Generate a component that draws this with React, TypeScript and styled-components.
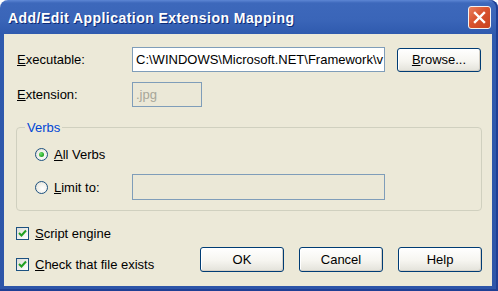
import React from "react";
import styled, { createGlobalStyle } from "styled-components";

const GlobalStyle = createGlobalStyle`
  html, body {
    margin: 0;
    padding: 0;
    background: #ffffff;
  }
  body {
    font-family: "Liberation Sans", Arial, sans-serif;
    font-size: 13px;
    color: #000;
  }
`;

const Window = styled.div`
  width: 498px;
  height: 291px;
  display: flex;
  flex-direction: column;
  border-radius: 8px 8px 0 0;
  background: linear-gradient(180deg, #5d86d4 0px, #3d68bb 3px, #3a65b8 20px, #2f5aae 34px, #2d55a8 100%);
  box-shadow: inset -2px 0 0 #1f3f94, inset 0 -2px 0 #1f3f94;
  overflow: hidden;
`;

const TitleBar = styled.div`
  height: 34px;
  flex: none;
  display: flex;
  align-items: center;
  justify-content: space-between;
  padding: 0 8px 0 8px;
`;

const Title = styled.div`
  color: #fff;
  font-family: "Liberation Sans", Arial, sans-serif;
  font-weight: bold;
  font-size: 14px;
  letter-spacing: 0.45px;
  text-shadow: 1px 1px 0 #0c2a78;
  padding-top: 2px;
`;

const CloseButton = styled.div`
  width: 21px;
  height: 21px;
  border: 1px solid #f2f2f2;
  border-radius: 3px;
  background: linear-gradient(135deg, #e9805f 0%, #d9532f 45%, #c8421f 100%);
  display: flex;
  align-items: center;
  justify-content: center;
  margin-top: 1px;
  margin-right: -1px;
`;

const Body = styled.div`
  flex: 1;
  margin: 0 6px 5px 4px;
  background: #ece9d8;
  padding: 13px 10px 0 12px;
  display: flex;
  flex-direction: column;
`;

const FieldRow = styled.div<{ top?: number }>`
  display: grid;
  grid-template-columns: 116px 253px 1fr;
  align-items: center;
  height: 25px;
  margin-top: ${(p) => p.top ?? 0}px;
`;

const Label = styled.span`
  padding-left: 1px;
  white-space: nowrap;
`;

const TextBox = styled.div<{ width?: number; disabled?: boolean; height?: number }>`
  box-sizing: border-box;
  width: ${(p) => (p.width ? `${p.width}px` : "100%")};
  height: ${(p) => p.height ?? 25}px;
  border: 1px solid #7f9db9;
  background: ${(p) => (p.disabled ? "#ebe8d7" : "#ffffff")};
  color: ${(p) => (p.disabled ? "#a7a699" : "#000")};
  display: flex;
  align-items: center;
  padding: 0 3px;
  white-space: nowrap;
  overflow: hidden;
`;

const Button = styled.div<{ width?: number; height?: number }>`
  box-sizing: border-box;
  width: ${(p) => p.width ?? 84}px;
  height: ${(p) => p.height ?? 25}px;
  border: 1px solid #003c74;
  border-radius: 3px;
  background: linear-gradient(180deg, #ffffff 0%, #f6f5f0 55%, #e3e2da 100%);
  box-shadow: inset -1px -1px 0 #d6d0c5, inset 1px 1px 0 #fff;
  display: flex;
  align-items: center;
  justify-content: center;
  color: #000;
`;

const Group = styled.fieldset`
  margin: 13px 0 0 0;
  padding: 9px 0 10px 18px;
  border: 1px solid #d0d0bf;
  border-radius: 4px;
  min-width: 0;
`;

const Legend = styled.legend`
  color: #0046d5;
  margin-left: -10px;
  padding: 0 2px;
  line-height: 15px;
`;

const RadioRow = styled.div<{ top?: number; h?: number }>`
  display: grid;
  grid-template-columns: 97px 253px;
  align-items: center;
  height: ${(p) => p.h ?? 20}px;
  margin-top: ${(p) => p.top ?? 0}px;
`;

const Option = styled.label`
  display: flex;
  align-items: center;
  gap: 6px;
  white-space: nowrap;
`;

const RadioCircle = styled.span<{ checked?: boolean }>`
  box-sizing: border-box;
  width: 13px;
  height: 13px;
  border-radius: 50%;
  border: 1px solid #1c5180;
  background: radial-gradient(circle at 60% 60%, #ffffff 0%, #f0efe8 55%, #d8d6cb 100%);
  display: flex;
  align-items: center;
  justify-content: center;

  &::after {
    content: "";
    display: ${(p) => (p.checked ? "block" : "none")};
    width: 5px;
    height: 5px;
    border-radius: 50%;
    background: radial-gradient(circle at 35% 35%, #6fe46f 0%, #21a121 70%);
  }
`;

const CheckBoxBox = styled.span`
  box-sizing: border-box;
  width: 13px;
  height: 13px;
  border: 1px solid #1c5180;
  background: linear-gradient(135deg, #dcdcd7 0%, #ffffff 100%);
  display: flex;
  align-items: center;
  justify-content: center;
`;

const Footer = styled.div`
  display: flex;
  justify-content: space-between;
  align-items: flex-end;
  margin-top: 12px;
`;

const CheckList = styled.div`
  display: flex;
  flex-direction: column;
  gap: 11px;
`;

const CheckRow = styled.label`
  display: flex;
  align-items: center;
  gap: 6px;
  height: 20px;
  white-space: nowrap;
`;

const ButtonBar = styled.div`
  display: flex;
  gap: 15px;
  margin-bottom: 2px;
`;

const U = styled.span`
  text-decoration: underline;
`;

const Check = () => (
  <CheckBoxBox>
    <svg width="9" height="9" viewBox="0 0 9 9">
      <path d="M1 4 L3.5 6.5 L8 1.5" fill="none" stroke="#21a121" strokeWidth="2" />
    </svg>
  </CheckBoxBox>
);

export default function App() {
  return (
    <>
      <GlobalStyle />
      <Window>
        <TitleBar>
          <Title>Add/Edit Application Extension Mapping</Title>
          <CloseButton>
            <svg width="13" height="13" viewBox="0 0 13 13">
              <path d="M2 2 L11 11 M11 2 L2 11" stroke="#fff" strokeWidth="2.4" strokeLinecap="square" />
            </svg>
          </CloseButton>
        </TitleBar>
        <Body>
          <FieldRow>
            <Label>
              <U>E</U>xecutable:
            </Label>
            <TextBox>C:\WINDOWS\Microsoft.NET\Framework\v</TextBox>
            <Button style={{ marginLeft: 12 }} height={24}>
              <span>
                <U>B</U>rowse...
              </span>
            </Button>
          </FieldRow>
          <FieldRow top={10}>
            <Label>
              <U>E</U>xtension:
            </Label>
            <TextBox width={70} disabled>
              .jpg
            </TextBox>
          </FieldRow>
          <Group>
            <Legend>Verbs</Legend>
            <RadioRow>
              <Option>
                <RadioCircle checked />
                <span>
                  <U>A</U>ll Verbs
                </span>
              </Option>
            </RadioRow>
            <RadioRow top={10} h={26}>
              <Option>
                <RadioCircle />
                <span>
                  <U>L</U>imit to:
                </span>
              </Option>
              <TextBox disabled height={26} />
            </RadioRow>
          </Group>
          <Footer>
            <CheckList>
              <CheckRow>
                <Check />
                <span>
                  <U>S</U>cript engine
                </span>
              </CheckRow>
              <CheckRow>
                <Check />
                <span>
                  <U>C</U>heck that file exists
                </span>
              </CheckRow>
            </CheckList>
            <ButtonBar>
              <Button>OK</Button>
              <Button>Cancel</Button>
              <Button>Help</Button>
            </ButtonBar>
          </Footer>
        </Body>
      </Window>
    </>
  );
}
